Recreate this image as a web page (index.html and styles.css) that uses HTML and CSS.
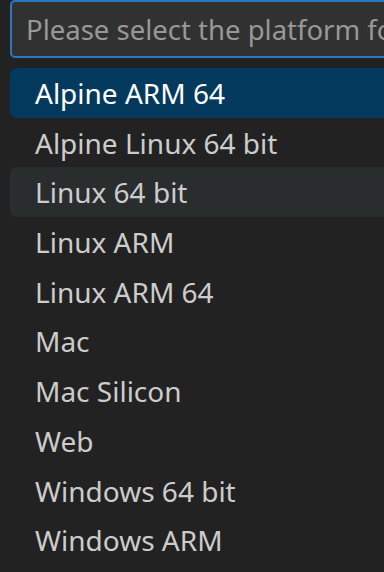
FILE: index.html
```html
<!DOCTYPE html>
<html lang="en">
<head>
    <meta charset="UTF-8">
    <meta name="viewport" content="width=device-width, initial-scale=1.0">
    <title>Select platform</title>
    <link rel="stylesheet" href="styles.css">
</head>
<body>
    <div class="quick-input">
        <div class="quick-inner">
            <div class="filter-box">
                <input type="text" class="filter-input" placeholder="Please select the platform for the download" />
            </div>

            <ul class="option-list">
                <li class="option selected">Alpine ARM 64</li>
                <li class="option">Alpine Linux 64 bit</li>
                <li class="option hovered">Linux 64 bit</li>
                <li class="option">Linux ARM</li>
                <li class="option">Linux ARM 64</li>
                <li class="option">Mac</li>
                <li class="option">Mac Silicon</li>
                <li class="option">Web</li>
                <li class="option">Windows 64 bit</li>
                <li class="option">Windows ARM</li>
            </ul>
        </div>
    </div>
</body>
</html>
```

FILE: styles.css
```css
body {
    margin: 0;
    padding: 0;
    background-color: #222222;
    font-family: "Noto Sans", "Open Sans", Arial, sans-serif;
    overflow: hidden;
    height: 100vh;
}

.quick-input {
    margin-left: 10px;
    overflow: hidden;
}

.quick-inner {
    width: 400px;
}

.filter-box {
    height: 58px;
    box-sizing: border-box;
    border: 2px solid #2b78c0;
    border-radius: 5px;
    background-color: #313131;
    display: flex;
    align-items: center;
}

.filter-input {
    width: 100%;
    border: none;
    outline: none;
    background: transparent;
    font-family: inherit;
    font-size: 27.5px;
    color: #cccccc;
    padding: 0 0 0 14px;
}

.filter-input::placeholder {
    color: #989898;
}

.option-list {
    list-style: none;
    margin: 10px 0 0 0;
    padding: 0;
}

.option {
    height: 49.7px;
    line-height: 50px;
    padding-left: 25px;
    border-radius: 7px;
    font-size: 28px;
    color: #cccccc;
    white-space: nowrap;
}

.option.selected {
    background-color: #04395e;
    color: #ffffff;
}

.option.hovered {
    background-color: #2a2d2e;
}
```
